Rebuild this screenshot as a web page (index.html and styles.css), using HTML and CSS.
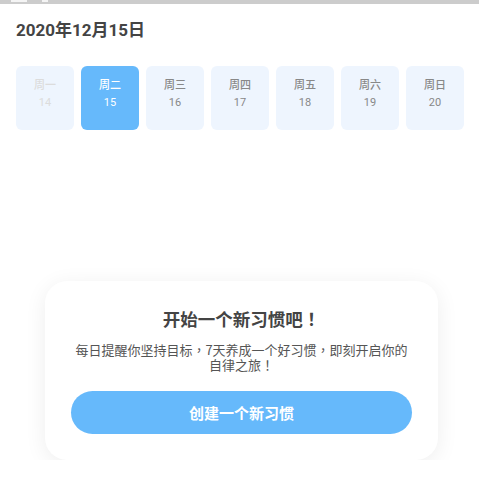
FILE: index.html
```html
<!DOCTYPE html>
<html lang="zh-CN">
<head>
<meta charset="utf-8">
<link rel="stylesheet" href="styles.css">
</head>
<body>
<div class="statusbar"><span class="sb-a"></span><span class="sb-b"></span></div>
<h1 class="date">2020年12月15日</h1>
<div class="week">
  <div class="day past"><span class="wd">周一</span><span class="num">14</span></div>
  <div class="day active"><span class="wd">周二</span><span class="num">15</span></div>
  <div class="day"><span class="wd">周三</span><span class="num">16</span></div>
  <div class="day"><span class="wd">周四</span><span class="num">17</span></div>
  <div class="day"><span class="wd">周五</span><span class="num">18</span></div>
  <div class="day"><span class="wd">周六</span><span class="num">19</span></div>
  <div class="day"><span class="wd">周日</span><span class="num">20</span></div>
</div>
<div class="empty">
  <h2 class="empty-title">开始一个新习惯吧<span class="punct">！</span></h2>
  <p class="empty-desc">每日提醒你坚持目标<span class="punct">，</span>7天养成一个好习惯<span class="punct">，</span>即刻开启你的自律之旅<span class="punct">！</span></p>
  <div class="btn">创建一个新习惯</div>
</div>
</body>
</html>
```
FILE: styles.css
```css
html, body {
  margin: 0;
  padding: 0;
  background: #ffffff;
  font-family: Roboto, "Noto Sans CJK SC", sans-serif;
}
.statusbar {
  height: 4px;
  background: #cccccc;
  display: flex;
  gap: 15px;
  padding-left: 11px;
}
.sb-a {
  width: 16px;
  height: 2px;
  background: #f4f4f4;
}
.sb-b {
  width: 6px;
  height: 2px;
  background: #f4f4f4;
}
.date {
  margin: 16px 0 0 16px;
  font-size: 17px;
  line-height: 20px;
  font-weight: 700;
  color: #444444;
}
.week {
  display: flex;
  gap: 7px;
  margin: 26px 0 0 16px;
}
.day {
  width: 58px;
  height: 64px;
  border-radius: 6px;
  background: #eef5fe;
  display: flex;
  flex-direction: column;
  align-items: center;
  padding-top: 11px;
  box-sizing: border-box;
  color: #888888;
}
.wd {
  font-family: "Noto Sans CJK SC", sans-serif;
  font-size: 11px;
  line-height: 14px;
  font-weight: 500;
}
.num {
  margin-top: 5px;
  font-size: 11px;
  line-height: 14px;
}
.day.past { color: #dcdcdc; }
.day.active {
  background: #66b9fb;
  color: #ffffff;
}
.empty {
  margin: 151px 0 0 45px;
  width: 393px;
  box-sizing: border-box;
  padding: 28px 26px 26px;
  border-radius: 22px;
  background: #ffffff;
  box-shadow: 0 4px 22px rgba(0, 0, 0, 0.07);
  text-align: center;
  font-family: "Noto Sans CJK SC", sans-serif;
  text-spacing-trim: space-all;
}
.punct {
  display: inline-block;
  width: 1em;
  text-align: center;
  font-family: "Noto Sans CJK TC", sans-serif;
  text-spacing-trim: space-all;
}
.empty-title {
  margin: 0;
  font-size: 17.5px;
  line-height: 20px;
  font-weight: 700;
  color: #444444;
}
.empty-desc {
  margin: 13px 0 0;
  font-size: 13px;
  line-height: 15px;
  color: #555555;
}
.btn {
  margin-top: 19px;
  height: 43px;
  border-radius: 22px;
  background: #66b9fb;
  color: #ffffff;
  font-size: 15px;
  font-weight: 700;
  display: flex;
  align-items: center;
  justify-content: center;
}
```
